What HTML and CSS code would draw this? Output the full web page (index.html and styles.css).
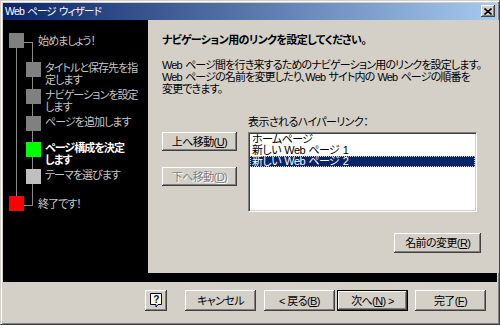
FILE: index.html
```html
<!DOCTYPE html>
<html lang="ja">
<head>
<meta charset="utf-8">
<title>Web ページ ウィザード</title>
<link rel="stylesheet" href="styles.css">
</head>
<body>
<div class="window">
  <div class="titlebar">
    <span class="title">Web ページ ウィザード</span>
    <span class="close"><svg width="8" height="7" viewBox="0 0 8 7"><path d="M0.5 0.5L7.5 6.5M7.5 0.5L0.5 6.5" stroke="#000" stroke-width="1.6"/></svg></span>
  </div>
  <div class="frame">
    <div class="steps">
      <svg class="tree" width="145" height="252" viewBox="0 0 145 252">
        <path d="M13.5 28V176M29.5 22V185.5M21 22.5H30M21 185.5H30" stroke="#8a8a8a" stroke-width="1" fill="none"/>
      </svg>
      <div class="step top first"><span class="sq gray"></span><span class="lbl">始めましょう！</span></div>
      <div class="step sub"><span class="sq gray"></span><span class="lbl">タイトルと保存先を指<br>定します</span></div>
      <div class="step sub"><span class="sq gray"></span><span class="lbl">ナビゲーションを設定<br>します</span></div>
      <div class="step sub"><span class="sq gray"></span><span class="lbl">ページを追加します</span></div>
      <div class="step sub"><span class="sq green"></span><span class="lbl active">ページ構成を決定<br>します</span></div>
      <div class="step sub"><span class="sq light"></span><span class="lbl">テーマを選びます</span></div>
      <div class="step top last"><span class="sq red"></span><span class="lbl">終了です！</span></div>
    </div>
    <div class="panel">
      <h1 class="heading">ナビゲーション用のリンクを設定してください。</h1>
      <p class="desc">Web ページ間を行き来するためのナビゲーション用のリンクを設定します。<br>Web ページの名前を変更したり、Web サイト内の Web ページの順番を<br>変更できます。</p>
      <div class="editor">
        <div class="movers">
          <button class="btn mover">上へ移動(<u>U</u>)</button>
          <button class="btn mover disabled">下へ移動(<u>D</u>)</button>
        </div>
        <div class="links">
          <div class="links-label">表示されるハイパーリンク：</div>
          <div class="listbox">
            <div class="item">ホームページ</div>
            <div class="item">新しい Web ページ 1</div>
            <div class="item selected">新しい Web ページ 2</div>
          </div>
        </div>
      </div>
      <div class="rename-row"><button class="btn rename">名前の変更(<u>R</u>)</button></div>
    </div>
  </div>
  <div class="footer">
    <button class="btn help"><svg width="13" height="15" viewBox="0 0 13 15"><path d="M0.5 0.5H11.5V11.5H8L6 14V11.5H0.5Z" fill="#ffffc8" stroke="#000040"/><text x="6" y="9.5" font-family="Liberation Sans, sans-serif" font-size="10" font-weight="bold" fill="#0000a0" text-anchor="middle">?</text></svg></button>
    <button class="btn wide cancel">キャンセル</button>
    <button class="btn wide back">&lt; 戻る(<u>B</u>)</button>
    <button class="btn wide next default">次へ(<u>N</u>) &gt;</button>
    <button class="btn wide finish">完了(<u>F</u>)</button>
  </div>
</div>
</body>
</html>
```

FILE: styles.css
```css
* { box-sizing: border-box; }
html, body { margin: 0; padding: 0; background: #d4d0c8; }
body {
  font-family: "Liberation Sans", "Noto Sans CJK JP", sans-serif;
  font-size: 11px;
  font-feature-settings: "palt";
  letter-spacing: -0.6px;
  word-spacing: 1px;
  color: #000;
}
.window {
  width: 500px;
  height: 325px;
  background: #d4d0c8;
  border: 1px solid;
  border-color: #d4d0c8 #404040 #404040 #d4d0c8;
  box-shadow: inset 1px 1px #fff, inset -1px -1px #808080;
  padding: 2px;
  display: flex;
  flex-direction: column;
}
.titlebar {
  height: 17px;
  flex: none;
  display: flex;
  align-items: center;
  justify-content: space-between;
  padding: 0 2px 0 2px;
  background: linear-gradient(to right, #0a246a, #a6caf0);
  color: #fff;
}
.title { font-size: 10.5px; line-height: 17px; letter-spacing: -0.8px; }
.close {
  width: 14px;
  height: 12px;
  background: #d4d0c8;
  box-shadow: inset -1px -1px #404040, inset 1px 1px #fff, inset -2px -2px #808080;
  display: flex;
  align-items: center;
  justify-content: center;
  margin-top: -1px;
}
.frame {
  height: 262px;
  flex: none;
  background: #000;
  display: flex;
  padding-bottom: 9px;
}
.steps {
  position: relative;
  width: 145px;
  flex: none;
  padding-top: 13px;
  display: flex;
  flex-direction: column;
  letter-spacing: -0.95px;
}
.tree { position: absolute; left: 0; top: 0; }
.step {
  position: relative;
  display: flex;
  align-items: flex-start;
  color: #c4c4c4;
  line-height: 12px;
}
.step.first { height: 29px; }
.step.sub { height: 26.8px; }
.sq { width: 15px; height: 15px; flex: none; }
.step.top .sq { margin-left: 6px; }
.step.sub .sq { margin-left: 23px; }
.step.top .lbl { margin-left: 14px; padding-top: 2px; }
.step.sub .lbl { margin-left: 4px; padding-top: 0; }
.lbl { white-space: nowrap; }
.lbl.active { color: #fff; font-weight: bold; }
.sq.gray { background: #808080; }
.sq.green { background: #00ff00; }
.sq.light { background: #c0c0c0; }
.sq.red { background: #ff0000; }

.panel {
  flex: 1;
  background: #d4d0c8;
  padding: 13px 18px 0 14px;
  display: flex;
  flex-direction: column;
}
.heading {
  margin: 0;
  font-size: 11px;
  font-weight: bold;
  line-height: 14px;
  white-space: nowrap;
}
.desc {
  margin: 12px 0 0 0;
  line-height: 12px;
  white-space: nowrap;
  letter-spacing: -0.85px;
}
.editor {
  margin-top: 21px;
  display: grid;
  grid-template-columns: 86px 229px;
}
.movers {
  padding-top: 16px;
  display: flex;
  flex-direction: column;
  gap: 16px;
}
.links-label { line-height: 12px; height: 16px; }
.listbox {
  height: 80px;
  background: #fff;
  border: 1px solid;
  border-color: #808080 #fff #fff #808080;
  box-shadow: inset 1px 1px #404040, inset -1px -1px #d4d0c8;
  padding: 1px 1px;
}
.item { line-height: 11px; height: 11px; padding-left: 2px; white-space: nowrap; }
.item.selected { background: #0a246a; color: #fff; outline: 1px dotted #d4d0c8; outline-offset: -1px; }

.btn {
  font: inherit;
  font-feature-settings: "palt";
  letter-spacing: -0.6px;
  background: #d4d0c8;
  border: none;
  padding: 0;
  margin: 0;
  color: #000;
  box-shadow: inset -1px -1px #404040, inset 1px 1px #fff, inset -2px -2px #808080, inset 2px 2px #d4d0c8;
  display: flex;
  align-items: center;
  justify-content: center;
  line-height: 12px;
}
.btn u { text-underline-offset: 1px; }
.mover { width: 75px; height: 19px; }
.btn.disabled { color: #808080; text-shadow: 1px 1px #fff; }
.rename-row {
  margin-top: 21px;
  display: flex;
  justify-content: flex-end;
}
.rename { width: 87px; height: 20px; }

.footer {
  flex: 1;
  display: flex;
  align-items: flex-start;
  padding: 8px 0 0 142px;
}
.help { width: 22px; height: 21px; margin-right: 18px; }
.wide { width: 71px; height: 21px; }
.cancel { margin-right: 8px; }
.back { margin-right: 2px; }
.next { margin-right: 7px; }
.btn.default {
  box-shadow: inset 0 0 0 1px #000, inset -2px -2px #404040, inset 2px 2px #fff, inset -3px -3px #808080;
}
```
